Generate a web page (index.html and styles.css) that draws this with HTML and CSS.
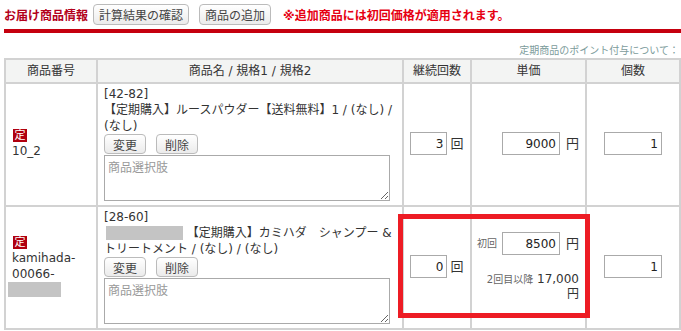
FILE: index.html
```html
<!DOCTYPE html>
<html lang="ja">
<head>
  <meta charset="UTF-8">
  <meta name="viewport" content="width=device-width, initial-scale=1.0">
  <link rel="stylesheet" href="styles.css">
</head>
<body>

<div class="page">
  <div class="section-head">
    <h2 class="section-title">お届け商品情報</h2>
    <button class="btn">計算結果の確認</button>
    <button class="btn">商品の追加</button>
    <span class="notice">※追加商品には初回価格が適用されます。</span>
  </div>

  <div class="point-note">定期商品のポイント付与について：</div>

  <div class="table-wrap">
    <table class="items">
      <colgroup>
        <col class="col-code">
        <col class="col-name">
        <col class="col-times">
        <col class="col-price">
        <col class="col-qty">
        <col class="col-more">
      </colgroup>
      <thead>
        <tr>
          <th>商品番号</th>
          <th>商品名 / 規格1 / 規格2</th>
          <th>継続回数</th>
          <th>単価</th>
          <th>個数</th>
          <th></th>
        </tr>
      </thead>
      <tbody>
        <tr>
          <td class="code">
            <span class="badge">定</span>
            10_2
          </td>
          <td class="name">
            [42-82]<br>
            【定期購入】ルースパウダー【送料無料】1 / (なし) / (なし)
            <div class="row-btns">
              <button class="btn btn-sm">変更</button>
              <button class="btn btn-sm">削除</button>
            </div>
            <textarea class="option" placeholder="商品選択肢"></textarea>
          </td>
          <td class="times"><input class="num num-s" type="text" value="3"><span class="unit">回</span></td>
          <td class="price">
            <div class="price-line"><input class="num" type="text" value="9000"><span class="unit">円</span></div>
          </td>
          <td class="qty"><input class="num" type="text" value="1"></td>
          <td></td>
        </tr>
        <tr>
          <td class="code">
            <span class="badge">定</span>
            kamihada-00066-
            <span class="masked masked-code"></span>
          </td>
          <td class="name">
            [28-60]<br>
            <span class="masked masked-name"></span> 【定期購入】カミハダ　シャンプー &amp; トリートメント / (なし) / (なし)
            <div class="row-btns">
              <button class="btn btn-sm">変更</button>
              <button class="btn btn-sm">削除</button>
            </div>
            <textarea class="option" placeholder="商品選択肢"></textarea>
          </td>
          <td class="times"><input class="num num-s" type="text" value="0"><span class="unit">回</span></td>
          <td class="price">
            <div class="price-line"><span class="price-label">初回</span><input class="num" type="text" value="8500"><span class="unit">円</span></div>
            <div class="price-later"><span class="price-label">2回目以降</span> 17,000 円</div>
          </td>
          <td class="qty"><input class="num" type="text" value="1"></td>
          <td></td>
        </tr>
      </tbody>
    </table>
    <!-- red frame drawn over the first-price cells -->
    <div class="highlight"></div>
  </div>
</div>

</body>
</html>
```

FILE: styles.css
```css
body {
  margin: 0;
  font-family: "DejaVu Sans", "Noto Sans CJK JP", sans-serif;
  font-size: 12px;
  color: #333;
  overflow: hidden;
  background-color: #fff;
}

.page {
  padding-left: 4px;
}

.section-head {
  display: flex;
  align-items: center;
  height: 29px;
  border-bottom: 4px solid #c5000e;
}

.section-title {
  margin: 0 5px 0 0;
  font-size: 12px;
  font-weight: bold;
  color: #b3001b;
}

.btn {
  height: 21px;
  padding: 0 5px;
  margin-right: 10px;
  font-family: inherit;
  font-size: 12px;
  color: #444;
  background: linear-gradient(#fff, #ebebeb);
  border: 1px solid #bbb;
  border-radius: 4px;
}

.notice {
  margin-left: 2px;
  font-weight: bold;
  color: #e60012;
}

.point-note {
  text-align: right;
  font-size: 10px;
  line-height: 14px;
  color: #7c9b9b;
  padding: 11px 2px 0 0;
}

.table-wrap {
  position: relative;
}

.items {
  border-collapse: collapse;
  table-layout: fixed;
  width: 778px;
}

.col-code { width: 92px; }
.col-name { width: 306px; }
.col-times { width: 68px; }
.col-price { width: 115px; }
.col-qty { width: 94px; }
.col-more { width: 103px; }

.items th,
.items td {
  border: 2px solid #d2d2d2;
}

.items th {
  background-color: #f3f4f3;
  font-weight: normal;
  line-height: 15px;
  padding: 4px 4px 3px;
  color: #333;
}

.items td {
  vertical-align: middle;
  line-height: 16px;
  padding: 2px 6px 4px;
}

.code {
  padding-left: 7px;
  line-height: 15px;
}

.badge {
  display: block;
  width: 14px;
  height: 13px;
  margin: 0 0 1px 1px;
  font-size: 11px;
  line-height: 13px;
  text-align: center;
  color: #fff;
  background-color: #b0000f;
}

.masked {
  display: inline-block;
  background-color: #c4c4c4;
}

.masked-code {
  display: block;
  width: 53px;
  height: 15px;
  margin-left: -4px;
}

.masked-name {
  width: 77px;
  height: 14px;
  vertical-align: -3px;
  margin-left: 2px;
}

.row-btns {
  display: flex;
  gap: 10px;
}

.btn-sm {
  height: 20px;
  margin: 0;
  padding: 0 8px;
}

.option {
  display: block;
  box-sizing: border-box;
  width: 286px;
  height: 46px;
  margin-top: 1px;
  padding: 2px 3px;
  font-family: inherit;
  font-size: 12px;
  border: 1px solid #aaa;
  resize: both;
}

.option::placeholder {
  color: #999;
}

.num {
  box-sizing: border-box;
  width: 58px;
  height: 23px;
  padding: 0 3px;
  font-family: inherit;
  font-size: 12px;
  color: #222;
  text-align: right;
  border: 1px solid #aaa;
  vertical-align: middle;
}

.num-s {
  width: 37px;
}

.unit {
  margin-left: 3px;
  font-size: 13px;
  vertical-align: middle;
}

.times,
.qty {
  text-align: center;
}

.items td.price {
  text-align: right;
  padding-left: 2px;
  padding-right: 6px;
}

.price-line {
  display: flex;
  align-items: center;
  justify-content: flex-end;
}

.price-line .unit {
  margin-left: 6px;
}

.price-label {
  flex-shrink: 0;
  white-space: nowrap;
  margin-right: 5px;
  font-size: 10px;
  color: #666;
}

.price-later {
  margin-top: 17px;
  line-height: 14px;
  font-size: 12px;
}

.price-later .price-label {
  margin-right: 0;
}

.highlight {
  position: absolute;
  left: 394px;
  top: 156px;
  width: 192px;
  height: 104px;
  box-sizing: border-box;
  border: 5px solid #ed1c24;
}
```
